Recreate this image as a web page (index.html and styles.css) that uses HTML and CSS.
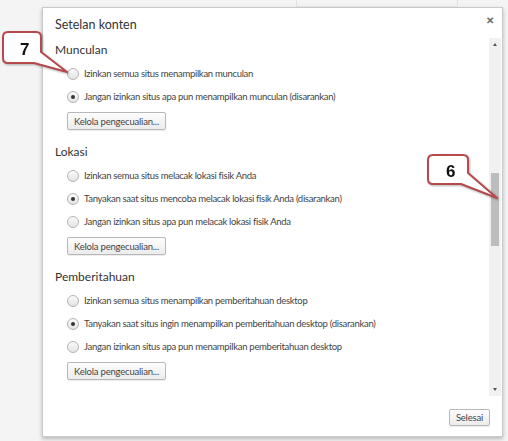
FILE: index.html
```html
<!DOCTYPE html>
<html lang="id">
<head>
  <meta charset="UTF-8">
  <title>Setelan konten</title>
  <link rel="stylesheet" href="styles.css">
</head>
<body>
  <div class="page">
    <div class="ghost-box"></div>

    <div class="dialog">
      <div class="dialog-head">
        <span class="title">Setelan konten</span>
        <span class="close">&#x2715;</span>
      </div>

      <div class="dialog-main">
        <div class="content">
          <div class="section">
            <h3>Munculan</h3>
            <label class="radio"><span class="dot"></span>Izinkan semua situs menampilkan munculan</label>
            <label class="radio"><span class="dot on"></span>Jangan izinkan situs apa pun menampilkan munculan (disarankan)</label>
            <button class="btn">Kelola pengecualian...</button>
          </div>

          <div class="section">
            <h3>Lokasi</h3>
            <label class="radio"><span class="dot"></span>Izinkan semua situs melacak lokasi fisik Anda</label>
            <label class="radio"><span class="dot on"></span>Tanyakan saat situs mencoba melacak lokasi fisik Anda (disarankan)</label>
            <label class="radio"><span class="dot"></span>Jangan izinkan situs apa pun melacak lokasi fisik Anda</label>
            <button class="btn">Kelola pengecualian...</button>
          </div>

          <div class="section">
            <h3>Pemberitahuan</h3>
            <label class="radio"><span class="dot"></span>Izinkan semua situs menampilkan pemberitahuan desktop</label>
            <label class="radio"><span class="dot on"></span>Tanyakan saat situs ingin menampilkan pemberitahuan desktop (disarankan)</label>
            <label class="radio"><span class="dot"></span>Jangan izinkan situs apa pun menampilkan pemberitahuan desktop</label>
            <button class="btn">Kelola pengecualian...</button>
          </div>

          <div class="section">
            <h3>Layar Penuh</h3>
          </div>
        </div>

        <div class="scrollbar">
          <span class="arrow up"></span>
          <div class="track"><div class="thumb"></div></div>
          <span class="arrow down"></span>
        </div>
      </div>

      <div class="dialog-foot">
        <button class="btn done">Selesai</button>
      </div>
    </div>

    <!-- callouts sit over the screenshot -->
    <svg class="callout callout-7" width="80" height="50" viewBox="0 0 80 50">
      <path d="M8 2 H36 Q41 2 41 7 V22 L67 42 L34 33 H8 Q3 33 3 28 V7 Q3 2 8 2 Z" />
      <text x="20" y="25">7</text>
    </svg>
    <svg class="callout callout-6" width="80" height="56" viewBox="0 0 80 56">
      <path d="M8 2 H38 Q43 2 43 7 V20 L72 45 L36 31 H8 Q3 31 3 26 V7 Q3 2 8 2 Z" />
      <text x="21" y="24">6</text>
    </svg>
  </div>
</body>
</html>
```

FILE: styles.css
```css
body {
  margin: 0;
  font-family: Lato, "Open Sans", sans-serif;
  color: #333;
}

.page {
  position: relative;
  width: 508px;
  height: 441px;
  overflow: hidden;
  background: #f4f4f4;
  padding: 7px 0 0 42px;
  box-sizing: border-box;
}

.ghost-box {
  position: absolute;
  top: 0;
  left: 296px;
  width: 160px;
  height: 6px;
  border: 1px solid #e2e2e2;
  border-top: none;
}

.dialog {
  width: 461px;
  height: 430px;
  background: #fff;
  border: 1px solid #c9c9c9;
  box-shadow: 0 2px 4px rgba(0, 0, 0, 0.25);
  display: flex;
  flex-direction: column;
  box-sizing: border-box;
}

.dialog-head {
  height: 30px;
  display: flex;
  align-items: center;
  justify-content: space-between;
  padding: 0 8px 0 12px;
}

.title {
  font-size: 12.5px;
  margin-top: 2px;
}

.close {
  font-family: "Open Sans", sans-serif;
  font-size: 10px;
  font-weight: bold;
  color: #666;
  margin-top: -6px;
}

.dialog-main {
  flex: 1;
  display: flex;
  overflow: hidden;
}

.content {
  flex: 1;
  padding: 4px 0 0 12px;
  overflow: hidden;
}

.section {
  margin-bottom: 14px;
}

h3 {
  margin: 0 0 4px;
  font-size: 12px;
  font-weight: normal;
  line-height: 16px;
}

.radio {
  display: flex;
  align-items: center;
  height: 23px;
  padding-left: 12px;
  font-size: 9.5px;
  letter-spacing: -0.3px;
  color: #444;
}

.dot {
  width: 10px;
  height: 10px;
  border: 1px solid #b4b4b4;
  border-radius: 50%;
  background: linear-gradient(#fafafa, #e4e4e4);
  margin-right: 5px;
  display: flex;
  align-items: center;
  justify-content: center;
}

.dot.on::after {
  content: "";
  width: 4px;
  height: 4px;
  border-radius: 50%;
  background: #333;
}

.btn {
  font-family: Lato, "Open Sans", sans-serif;
  font-size: 9.5px;
  letter-spacing: -0.2px;
  color: #444;
  height: 18px;
  padding: 0 6px;
  margin: 4px 0 0 12px;
  border: 1px solid #b8b8b8;
  border-radius: 2px;
  background: linear-gradient(#fdfdfd, #ececec);
  box-shadow: 0 1px 1px rgba(0, 0, 0, 0.08);
}

.scrollbar {
  width: 12px;
  margin-right: 1px;
  background: #f1f1f1;
  display: flex;
  flex-direction: column;
  align-items: center;
}

.arrow {
  width: 0;
  height: 0;
  border-left: 2.5px solid transparent;
  border-right: 2.5px solid transparent;
  margin: 5px 0;
}

.arrow.up {
  border-bottom: 3px solid #555;
}

.arrow.down {
  border-top: 3px solid #555;
}

.track {
  flex: 1;
  width: 100%;
  padding-top: 122px;
  box-sizing: border-box;
}

.thumb {
  width: 8px;
  height: 73px;
  margin: 0 auto;
  background: #bdbdbd;
}

.dialog-foot {
  height: 40px;
  display: flex;
  align-items: center;
  justify-content: flex-end;
  padding-right: 12px;
}

.btn.done {
  margin: 2px 0 0;
  height: 17px;
  padding: 0 6px;
  font-size: 9.5px;
}

.callout {
  position: absolute;
  overflow: visible;
  filter: drop-shadow(1px 1px 1px rgba(0, 0, 0, 0.3));
}

.callout path {
  fill: #fff;
  stroke: #b5494b;
  stroke-width: 2;
  stroke-linejoin: round;
}

.callout text {
  font-family: "Liberation Sans", Arial, sans-serif;
  font-weight: bold;
  font-size: 17px;
  fill: #111;
}

.callout-7 {
  left: 0;
  top: 30px;
}

.callout-6 {
  left: 425px;
  top: 153px;
}
```
